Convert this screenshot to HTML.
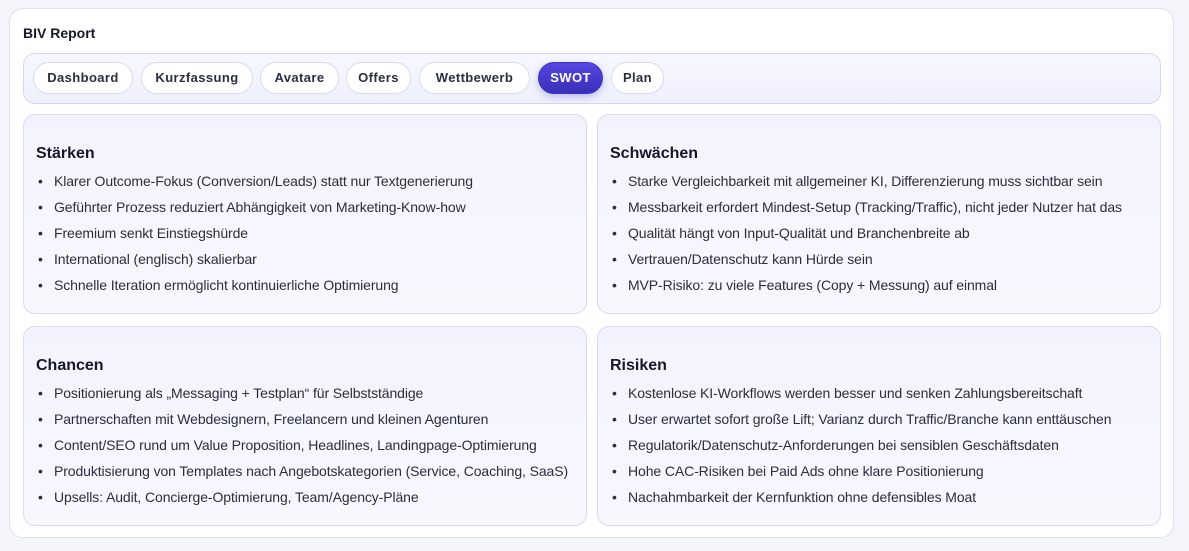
<!DOCTYPE html>
<html><head><meta charset="utf-8"><style>
*{box-sizing:border-box;margin:0;padding:0}
body{width:1189px;height:551px;background:#f4f5fa;font-family:"Liberation Sans",sans-serif;color:#1a1d2e;position:relative;overflow:hidden}
.outer{position:absolute;left:9px;top:8px;width:1165px;height:530px;background:#fff;border:1px solid #dfe0f0;border-radius:14px}
h1{position:absolute;left:13px;top:16px;font-size:14px;font-weight:bold;color:#15172a}
.bar{position:absolute;left:13px;top:44px;width:1138px;height:51px;border:1px solid #d5d6f5;border-radius:12px;background:linear-gradient(#f6f7ff,#eef0fc)}
.tab{position:absolute;top:8px;height:32px;border:1px solid #d9dbf0;border-radius:16px;background:#fff;font-size:13px;font-weight:bold;color:#2b2e3e;text-align:center;line-height:30px;letter-spacing:.4px}
.tab.on{background:linear-gradient(#5446e0,#3a2fb8);color:#fff;border-color:#3f33c4;box-shadow:0 3px 8px rgba(70,60,200,.3)}
.card{position:absolute;width:564px;height:200px;border:1px solid #d8daf2;border-radius:12px;background:linear-gradient(#f2f3fe,#f7f8fe)}
.card h2{position:absolute;left:12px;top:30px;font-size:16px;font-weight:bold;color:#15172a}
.card ul{position:absolute;left:12px;top:57px;list-style:none}
.card li{font-size:14px;letter-spacing:-.1px;height:26px;line-height:18px;color:#2a2d3c;white-space:nowrap}
.card li:before{content:"•";display:inline-block;width:16px;padding-left:2px}
</style></head><body>
<div class="outer">
<h1>BIV Report</h1>
<div class="bar">
<div class="tab" style="left:9px;width:100px">Dashboard</div>
<div class="tab" style="left:117px;width:112px">Kurzfassung</div>
<div class="tab" style="left:236px;width:79px">Avatare</div>
<div class="tab" style="left:322px;width:65px">Offers</div>
<div class="tab" style="left:395px;width:111px">Wettbewerb</div>
<div class="tab on" style="left:514px;width:65px">SWOT</div>
<div class="tab" style="left:587px;width:53px">Plan</div>
</div>
</div>
<div class="card" style="left:23px;top:114px"><h2>Stärken</h2><ul>
<li>Klarer Outcome-Fokus (Conversion/Leads) statt nur Textgenerierung</li>
<li>Geführter Prozess reduziert Abhängigkeit von Marketing-Know-how</li>
<li>Freemium senkt Einstiegshürde</li>
<li>International (englisch) skalierbar</li>
<li>Schnelle Iteration ermöglicht kontinuierliche Optimierung</li></ul></div>
<div class="card" style="left:597px;top:114px"><h2>Schwächen</h2><ul>
<li>Starke Vergleichbarkeit mit allgemeiner KI, Differenzierung muss sichtbar sein</li>
<li>Messbarkeit erfordert Mindest-Setup (Tracking/Traffic), nicht jeder Nutzer hat das</li>
<li>Qualität hängt von Input-Qualität und Branchenbreite ab</li>
<li>Vertrauen/Datenschutz kann Hürde sein</li>
<li>MVP-Risiko: zu viele Features (Copy + Messung) auf einmal</li></ul></div>
<div class="card" style="left:23px;top:326px"><h2>Chancen</h2><ul>
<li>Positionierung als „Messaging + Testplan“ für Selbstständige</li>
<li>Partnerschaften mit Webdesignern, Freelancern und kleinen Agenturen</li>
<li>Content/SEO rund um Value Proposition, Headlines, Landingpage-Optimierung</li>
<li>Produktisierung von Templates nach Angebotskategorien (Service, Coaching, SaaS)</li>
<li>Upsells: Audit, Concierge-Optimierung, Team/Agency-Pläne</li></ul></div>
<div class="card" style="left:597px;top:326px"><h2>Risiken</h2><ul>
<li>Kostenlose KI-Workflows werden besser und senken Zahlungsbereitschaft</li>
<li>User erwartet sofort große Lift; Varianz durch Traffic/Branche kann enttäuschen</li>
<li>Regulatorik/Datenschutz-Anforderungen bei sensiblen Geschäftsdaten</li>
<li>Hohe CAC-Risiken bei Paid Ads ohne klare Positionierung</li>
<li>Nachahmbarkeit der Kernfunktion ohne defensibles Moat</li></ul></div>
</body></html>
